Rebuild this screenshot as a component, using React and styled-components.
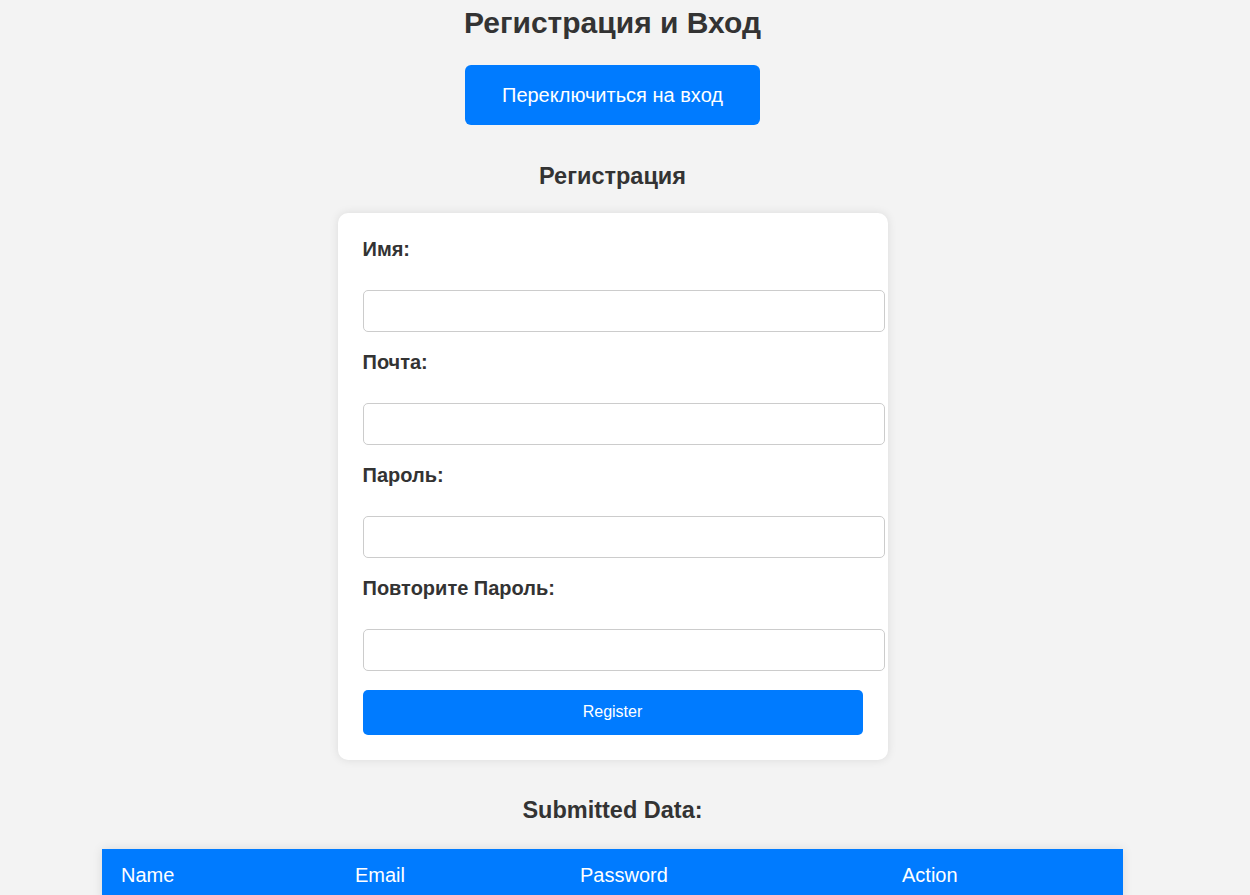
import React from "react";
import styled, { createGlobalStyle } from "styled-components";

const Global = createGlobalStyle`
  html, body { margin: 0; padding: 0; background: #f3f3f3; }
  body { font-family: "Liberation Sans", Arial, sans-serif; color: #333; }
`;

const Page = styled.div`
  width: 1225px;
  display: flex;
  flex-direction: column;
  align-items: center;
`;

const Title = styled.h1`
  margin: 6px 0 0;
  font-size: 30px;
  line-height: 34px;
  font-weight: bold;
`;

const ToggleButton = styled.button`
  margin-top: 25px;
  background: #007bff;
  color: #fff;
  border: none;
  border-radius: 6px;
  font-family: inherit;
  font-size: 20px;
  line-height: 24px;
  padding: 18px 37px;
  cursor: pointer;
`;

const SectionTitle = styled.h2`
  margin: ${(p) => p.$top}px 0 0;
  font-size: 23.5px;
  line-height: 26px;
  font-weight: bold;
`;

const Card = styled.form`
  margin-top: 24px;
  width: 500px;
  padding: 25px;
  background: #fff;
  border-radius: 10px;
  box-shadow: 0 0 10px rgba(0, 0, 0, 0.1);
  display: flex;
  flex-direction: column;
`;

const Group = styled.div`
  display: flex;
  flex-direction: column;
  margin-bottom: 19px;
`;

const Label = styled.label`
  font-size: 20px;
  line-height: 23px;
  font-weight: bold;
  margin-bottom: 29px;
`;

const Input = styled.input`
  width: 500px;
  height: 20px;
  padding: 10px;
  border: 1px solid #ccc;
  border-radius: 5px;
  font-size: 16px;
  font-family: inherit;
  background: #fff;
  box-sizing: content-box;
`;

const SubmitButton = styled.button`
  width: 500px;
  height: 45px;
  background: #007bff;
  color: #fff;
  border: none;
  border-radius: 5px;
  font-family: inherit;
  font-size: 16px;
  line-height: 20px;
  padding: 0 0 2px;
  cursor: pointer;
`;

const Table = styled.table`
  margin-top: 26px;
  width: 1021px;
  table-layout: fixed;
  border-collapse: collapse;
  background: #fff;
  box-shadow: 0 0 10px rgba(0, 0, 0, 0.1);
`;

const Th = styled.th`
  box-sizing: border-box;
  background: #007bff;
  color: #fff;
  font-weight: normal;
  font-size: 20px;
  line-height: 23px;
  text-align: left;
  padding: 15px 19px;
  width: ${(p) => p.$w}px;
`;

const fields = ["Имя:", "Почта:", "Пароль:", "Повторите Пароль:"];
const types = ["text", "email", "password", "password"];

export default function App() {
  return (
    <>
      <Global />
      <Page>
        <Title>Регистрация и Вход</Title>
        <ToggleButton type="button">Переключиться на вход</ToggleButton>
        <SectionTitle $top={38}>Регистрация</SectionTitle>
        <Card onSubmit={(e) => e.preventDefault()}>
          {fields.map((f, i) => (
            <Group key={f}>
              <Label>{f}</Label>
              <Input type={types[i]} />
            </Group>
          ))}
          <SubmitButton type="submit">Register</SubmitButton>
        </Card>
        <SectionTitle $top={37}>Submitted Data:</SectionTitle>
        <Table>
          <thead>
            <tr>
              <Th $w={234}>Name</Th>
              <Th $w={225}>Email</Th>
              <Th $w={322}>Password</Th>
              <Th $w={240}>Action</Th>
            </tr>
          </thead>
        </Table>
      </Page>
    </>
  );
}
